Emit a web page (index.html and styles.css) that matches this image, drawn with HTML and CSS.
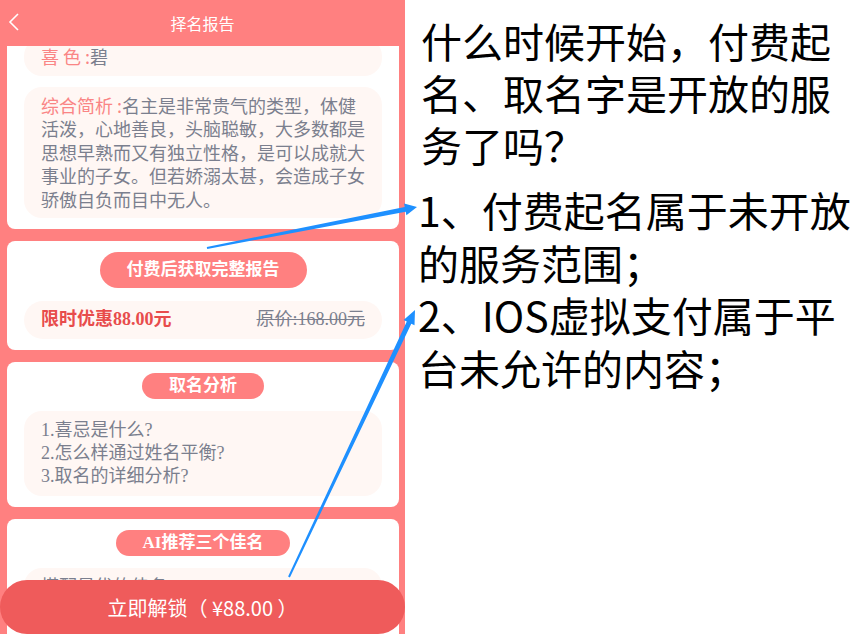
FILE: index.html
```html
<!DOCTYPE html>
<html lang="zh-CN">
<head>
<meta charset="UTF-8">
<meta name="viewport" content="width=device-width, initial-scale=1.0">
<title>择名报告</title>
<link rel="stylesheet" href="styles.css">
</head>
<body>

<div class="phone">
  <div class="header">
    <svg class="back" width="12" height="18" viewBox="0 0 12 18"><polyline points="10,1 2,9 10,17" fill="none" stroke="#fff" stroke-width="1.6"/></svg>
    <span>择名报告</span>
  </div>

  <div class="scroll">
    <div class="scroll-inner">
      <div class="card first">
        <div class="box short"><span class="label">喜 色 :</span>碧</div>
        <div class="box"><span class="label">综合简析 :</span>名主是非常贵气的类型，体健活泼，心地善良，头脑聪敏，大多数都是思想早熟而又有独立性格，是可以成就大事业的子女。但若娇溺太甚，会造成子女骄傲自负而目中无人。</div>
      </div>

      <div class="card">
        <div class="pill big">付费后获取完整报告</div>
        <div class="box price">
          <span class="now">限时优惠88.00元</span>
          <span class="old">原价:168.00元</span>
        </div>
      </div>

      <div class="card">
        <div class="pill">取名分析</div>
        <div class="box list">
          1.喜忌是什么?<br>
          2.怎么样通过姓名平衡?<br>
          3.取名的详细分析?
        </div>
      </div>

      <div class="card">
        <div class="pill">AI推荐三个佳名</div>
        <div class="box list">
          搭配最优的佳名<br>
          姓名的详细解析
        </div>
      </div>
    </div>
  </div>

  <div class="unlock">立即解锁（ ¥88.00 ）</div>
</div>

<div class="notes">
  <p class="question">什么时候开始，付费起<br>名、取名字是开放的服<br>务了吗？</p>
  <p class="answer">1、付费起名属于未开放<br>的服务范围；<br>2、IOS虚拟支付属于平<br>台未允许的内容；</p>
</div>

<!-- annotation arrows drawn over the screenshot -->
<svg class="arrows" width="860" height="634" viewBox="0 0 860 634">
  <polygon fill="#1e90ff" points="206.8,247 404.7,206.9 404.1,203.4 417,207 406.4,215.2 405.7,211.8 207.2,249"/>
  <polygon fill="#1e90ff" points="288.1,576.6 406.8,321.6 403.6,320.1 415,310 414.5,325.2 411.3,323.7 289.9,577.4"/>
</svg>

</body>
</html>
```

FILE: styles.css
```css
body {
  margin: 0;
  padding: 0;
  display: flex;
  width: 860px;
  height: 634px;
  overflow: hidden;
  background-color: #ffffff;
  position: relative;
  font-family: "Noto Sans CJK SC", sans-serif;
}

.phone {
  width: 405px;
  height: 634px;
  flex-shrink: 0;
  background-color: #ff8080;
  position: relative;
  display: flex;
  flex-direction: column;
  overflow: hidden;
}

.header {
  height: 46px;
  flex-shrink: 0;
  display: flex;
  align-items: center;
  justify-content: center;
  color: #fff;
  font-size: 16px;
  position: relative;
  z-index: 2;
  background-color: #ff8080;
}

.header .back {
  position: absolute;
  left: 8px;
  top: 13px;
}

.scroll {
  flex: 1;
  overflow: hidden;
}

.scroll-inner {
  margin-top: -22px;
  padding: 0 6px 0 7px;
  display: flex;
  flex-direction: column;
  gap: 12px;
}

.card {
  background-color: #fff;
  border-radius: 8px;
  padding: 11px 17px;
  display: flex;
  flex-direction: column;
  align-items: center;
  gap: 12px;
  font-family: "Liberation Serif", "Noto Sans CJK SC", serif;
}

.card.first {
  padding-top: 14px;
  padding-bottom: 11px;
  gap: 11px;
}

.box {
  align-self: stretch;
  background-color: #fff7f4;
  border-radius: 18px;
  padding: 7px 17px;
  color: #7b7f8e;
  font-size: 18px;
  line-height: 23.4px;
  font-family: "Noto Sans CJK SC", sans-serif;
}

.box.short {
  height: 38px;
  padding-top: 0;
  padding-bottom: 0;
  display: flex;
  align-items: center;
}

.label {
  color: #fa8585;
}

.pill {
  background-color: #ff8080;
  color: #fff;
  font-weight: bold;
  font-size: 17px;
  height: 26px;
  line-height: 26px;
  padding: 0 27px;
  border-radius: 13px;
}

.pill.big {
  height: 36px;
  line-height: 36px;
  border-radius: 18px;
  padding: 0 27px;
  margin-bottom: 1px;
}

.box.price {
  height: 38px;
  padding-top: 0;
  padding-bottom: 0;
  display: flex;
  align-items: center;
  justify-content: space-between;
  border-radius: 19px;
  font-family: "Liberation Serif", "Noto Sans CJK SC", serif;
}

.now {
  color: #e84c4c;
  font-weight: bold;
}

.old {
  text-decoration: line-through;
}

.box.list {
  padding: 8px 17px;
  line-height: 23px;
  font-family: "Liberation Serif", "Noto Sans CJK SC", serif;
}

.unlock {
  position: absolute;
  left: 0;
  bottom: 0;
  width: 405px;
  height: 54px;
  border-radius: 27px;
  background-color: #ef5b5b;
  color: #fff;
  font-size: 20px;
  display: flex;
  align-items: center;
  justify-content: center;
  z-index: 3;
}

.notes {
  flex: 1;
  padding: 14px 0 0 16px;
  color: #000;
  font-size: 41px;
}

.notes p {
  margin: 0;
}

.question {
  line-height: 52px;
}

.answer {
  margin-top: 13px !important;
  margin-left: -3px !important;
  line-height: 52.5px;
}

.arrows {
  position: absolute;
  left: 0;
  top: 0;
  z-index: 5;
  pointer-events: none;
}
```
